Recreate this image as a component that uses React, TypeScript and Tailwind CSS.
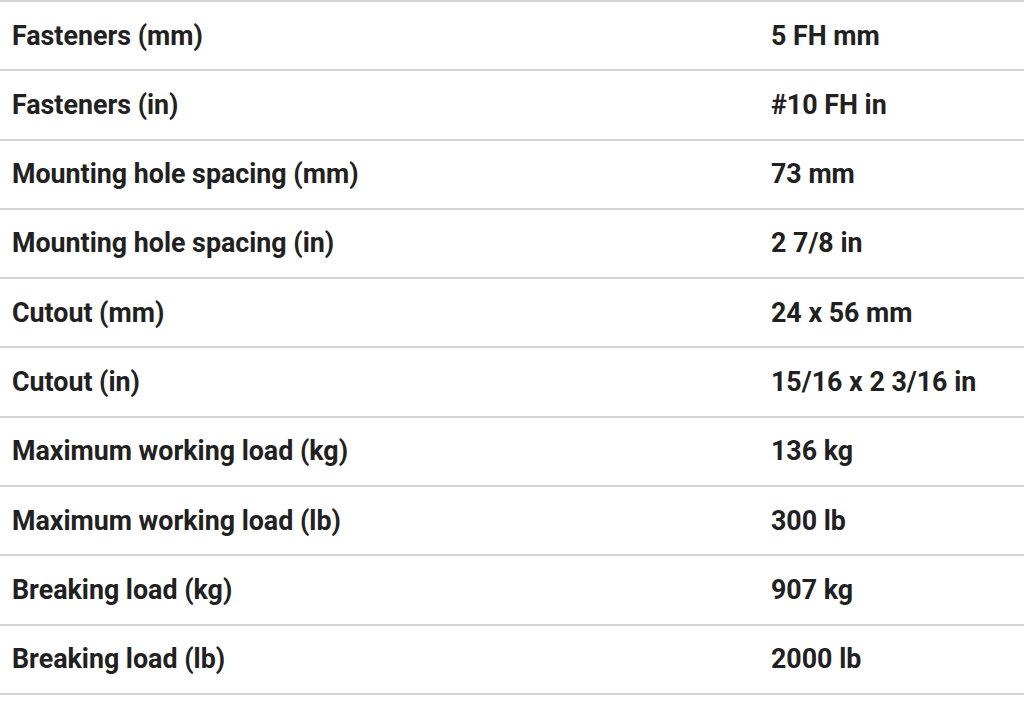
import React from "react";

const rows: [string, string][] = [
  ["Fasteners (mm)", "5 FH mm"],
  ["Fasteners (in)", "#10 FH in"],
  ["Mounting hole spacing (mm)", "73 mm"],
  ["Mounting hole spacing (in)", "2 7/8 in"],
  ["Cutout (mm)", "24 x 56 mm"],
  ["Cutout (in)", "15/16 x 2 3/16 in"],
  ["Maximum working load (kg)", "136 kg"],
  ["Maximum working load (lb)", "300 lb"],
  ["Breaking load (kg)", "907 kg"],
  ["Breaking load (lb)", "2000 lb"],
];

export default function App() {
  return (
    <div
      className="w-[1024px] h-[709px] bg-white text-[#212121] overflow-hidden"
      style={{ fontFamily: "Roboto, 'Liberation Sans', sans-serif" }}
    >
      <div className="border-t-2 border-[#d4d4d4]">
        {rows.map(([k, v]) => (
          <div
            key={k}
            className="grid grid-cols-[759px_1fr] h-[69.3px] items-center border-b-2 border-[#d4d4d4] text-[26.8px] font-bold"
          >
            <div className="pl-3">{k}</div>
            <div className="pl-3">{v}</div>
          </div>
        ))}
      </div>
    </div>
  );
}
